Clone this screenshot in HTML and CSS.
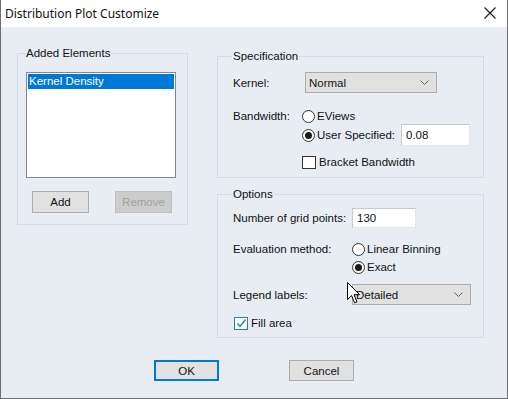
FILE: index.html
```html
<!DOCTYPE html>
<html lang="en">
<head>
    <meta charset="UTF-8">
    <title>Distribution Plot Customize</title>
    <link rel="stylesheet" href="styles.css">
</head>
<body>
    <div class="dialog">
        <div class="titlebar">
            <span class="title">Distribution Plot Customize</span>
            <svg class="close-icon" width="12" height="12" viewBox="0 0 12 12">
                <path d="M0.5 0.5 L11.5 11.5 M11.5 0.5 L0.5 11.5" stroke="#1a1a1a" stroke-width="1.1" fill="none"/>
            </svg>
        </div>

        <div class="dialog-body">
            <div class="panels">
                <fieldset class="group group-elements">
                    <legend>Added Elements</legend>
                    <div class="listbox">
                        <div class="list-item selected">Kernel Density</div>
                    </div>
                    <div class="list-buttons">
                        <button class="btn">Add</button>
                        <button class="btn" disabled>Remove</button>
                    </div>
                </fieldset>

                <div class="right-col">
                    <fieldset class="group group-spec">
                        <legend>Specification</legend>
                        <div class="row row-kernel">
                            <span class="label">Kernel:</span>
                            <div class="select select-kernel">
                                <span>Normal</span>
                                <svg class="chevron" width="9" height="5" viewBox="0 0 9 5"><path d="M0.5 0.5 L4.5 4.5 L8.5 0.5" stroke="#606060" fill="none"/></svg>
                            </div>
                        </div>
                        <div class="row row-bandwidth">
                            <span class="label">Bandwidth:</span>
                            <div class="stack">
                                <div class="choice choice-eviews"><span class="radio"></span>EViews</div>
                                <div class="choice choice-user">
                                    <span class="radio checked"></span>User Specified:
                                    <div class="edit edit-bw">0.08</div>
                                </div>
                            </div>
                        </div>
                        <div class="row row-bracket">
                            <span class="label"></span>
                            <div class="choice"><span class="checkbox"></span>Bracket Bandwidth</div>
                        </div>
                    </fieldset>

                    <fieldset class="group group-options">
                        <legend>Options</legend>
                        <div class="row row-grid">
                            <span class="label">Number of grid points:</span>
                            <div class="edit edit-grid">130</div>
                        </div>
                        <div class="row row-eval">
                            <span class="label">Evaluation method:</span>
                            <div class="stack">
                                <div class="choice choice-linear"><span class="radio"></span>Linear Binning</div>
                                <div class="choice choice-exact"><span class="radio checked"></span>Exact</div>
                            </div>
                        </div>
                        <div class="row row-legend">
                            <span class="label">Legend labels:</span>
                            <div class="select select-legend">
                                <span>Detailed</span>
                                <svg class="chevron" width="9" height="5" viewBox="0 0 9 5"><path d="M0.5 0.5 L4.5 4.5 L8.5 0.5" stroke="#606060" fill="none"/></svg>
                            </div>
                        </div>
                        <div class="row row-fill">
                            <div class="choice">
                                <span class="checkbox checked">
                                    <svg width="11" height="11" viewBox="0 0 11 11"><path d="M1.5 5.5 L4 8.5 L9.5 1.5" stroke="#2b78c8" stroke-width="1.4" fill="none"/></svg>
                                </span>Fill area
                            </div>
                        </div>
                    </fieldset>
                </div>
            </div>

            <div class="dialog-buttons">
                <button class="btn btn-default">OK</button>
                <button class="btn">Cancel</button>
            </div>
        </div>

        <!-- mouse pointer sitting over the legend dropdown -->
        <svg class="cursor" width="14" height="23" viewBox="0 0 14 23">
            <path d="M0.5 0.5 L0.5 17.5 L4.6 13.6 L7.6 20.8 L10 19.8 L7 12.7 L12.6 12.7 Z" fill="#fff" stroke="#000" stroke-width="1"/>
        </svg>
    </div>
</body>
</html>
```

FILE: styles.css
```css
* {
    margin: 0;
    padding: 0;
    box-sizing: border-box;
}

body {
    width: 508px;
    height: 399px;
    overflow: hidden;
    font-family: 'Liberation Sans', Arial, sans-serif;
    font-size: 11.5px;
    color: #111;
    background: #e8edf4;
}

.dialog {
    position: relative;
    width: 508px;
    height: 399px;
    border: 1px solid #6e6e6e;
    border-top: none;
    background: #e8edf4;
    display: flex;
    flex-direction: column;
}

.titlebar {
    height: 27px;
    background: #fff;
    display: flex;
    align-items: center;
    justify-content: space-between;
    padding: 0 11px 1px 4px;
}

.title {
    font-family: 'Noto Sans', 'Open Sans', sans-serif;
    font-size: 12px;
}

.dialog-body {
    flex: 1;
    display: flex;
    flex-direction: column;
}

.panels {
    display: flex;
    align-items: flex-start;
    padding-left: 16px;
    gap: 29px;
}

/* group boxes */
.group {
    border: 1px solid #d4dbe5;
    padding: 0 8px;
    min-width: 0;
}

.group legend {
    height: 14px;
    line-height: 14px;
    padding: 0 1px;
    margin-left: -1px;
}

.group-elements {
    width: 171px;
    margin-top: 19px;
    padding-bottom: 11px;
}

.listbox {
    width: 150px;
    height: 106px;
    margin-top: 12px;
    background: #fff;
    border: 1px solid #828790;
    padding: 1px;
}

.list-item {
    height: 15px;
    line-height: 14px;
    padding-left: 1px;
}

.list-item.selected {
    background: #0078d7;
    color: #fff;
}

.list-buttons {
    display: flex;
    gap: 26px;
    margin-top: 13px;
    padding-left: 6px;
}

.btn {
    width: 57px;
    height: 22px;
    font-family: 'Liberation Sans', Arial, sans-serif;
    font-size: 11.5px;
    color: #111;
    background: #e1e1e1;
    border: 1px solid #adadad;
}

.btn:disabled {
    background: #cccccc;
    border-color: #bfbfbf;
    color: #a0a0a0;
}

.right-col {
    width: 267px;
    margin-top: 22px;
    display: flex;
    flex-direction: column;
}

.group-spec {
    padding: 0 8px 7px 15px;
}

.group-options {
    margin-top: 9px;
    padding: 0 8px 6px 15px;
}

.row {
    display: flex;
    align-items: flex-start;
}

.label {
    flex-shrink: 0;
    line-height: 16px;
}

.group-spec .label {
    width: 69px;
}

.group-options .label {
    width: 119px;
}

.row-kernel {
    margin-top: 9px;
    align-items: center;
}

.row-bandwidth {
    margin-top: 15px;
}

.row-bracket {
    margin-top: 8px;
}

.row-grid {
    margin-top: 7px;
    align-items: center;
}

.row-eval {
    margin-top: 13px;
}

.row-legend {
    margin-top: 9px;
    align-items: center;
}

.row-fill {
    margin-top: 10px;
    padding-left: 1px;
}

.stack {
    display: flex;
    flex-direction: column;
}

.choice {
    display: flex;
    align-items: center;
    height: 16px;
    white-space: nowrap;
}

.choice-user {
    height: 22px;
}

.choice-exact {
    margin-top: 2px;
}

.radio {
    width: 13px;
    height: 13px;
    border: 1px solid #333;
    border-radius: 50%;
    background: #fff;
    margin-right: 2px;
    display: flex;
    align-items: center;
    justify-content: center;
}

.radio.checked::after {
    content: '';
    width: 7px;
    height: 7px;
    border-radius: 50%;
    background: #1a1a1a;
}

.checkbox {
    width: 14px;
    height: 13px;
    border: 1px solid #333;
    background: #fff;
    margin-right: 3px;
    display: flex;
    align-items: center;
    justify-content: center;
}

.checkbox.checked {
    border-color: #2b78c8;
}

.select {
    height: 21px;
    background: #e1e1e1;
    border: 1px solid #adadad;
    display: flex;
    align-items: center;
    justify-content: space-between;
    padding: 0 7px 0 3px;
}

.select-kernel {
    width: 132px;
    margin-left: 3px;
}

.select-legend {
    width: 119px;
}

.edit {
    background: #fff;
    border: 1px solid #c5cad1;
    border-right-color: #e3e6ea;
    border-bottom-color: #e3e6ea;
    padding-left: 4px;
    display: flex;
    align-items: center;
}

.edit-bw {
    width: 69px;
    height: 22px;
    margin-left: 6px;
}

.edit-grid {
    width: 64px;
    height: 20px;
}

.dialog-buttons {
    display: flex;
    justify-content: center;
    gap: 70px;
    margin-top: 22px;
}

.dialog-buttons .btn {
    width: 65px;
    height: 21px;
}

.btn-default {
    border: 2px solid #0078d7;
}

.cursor {
    position: absolute;
    left: 346px;
    top: 282px;
}
```
